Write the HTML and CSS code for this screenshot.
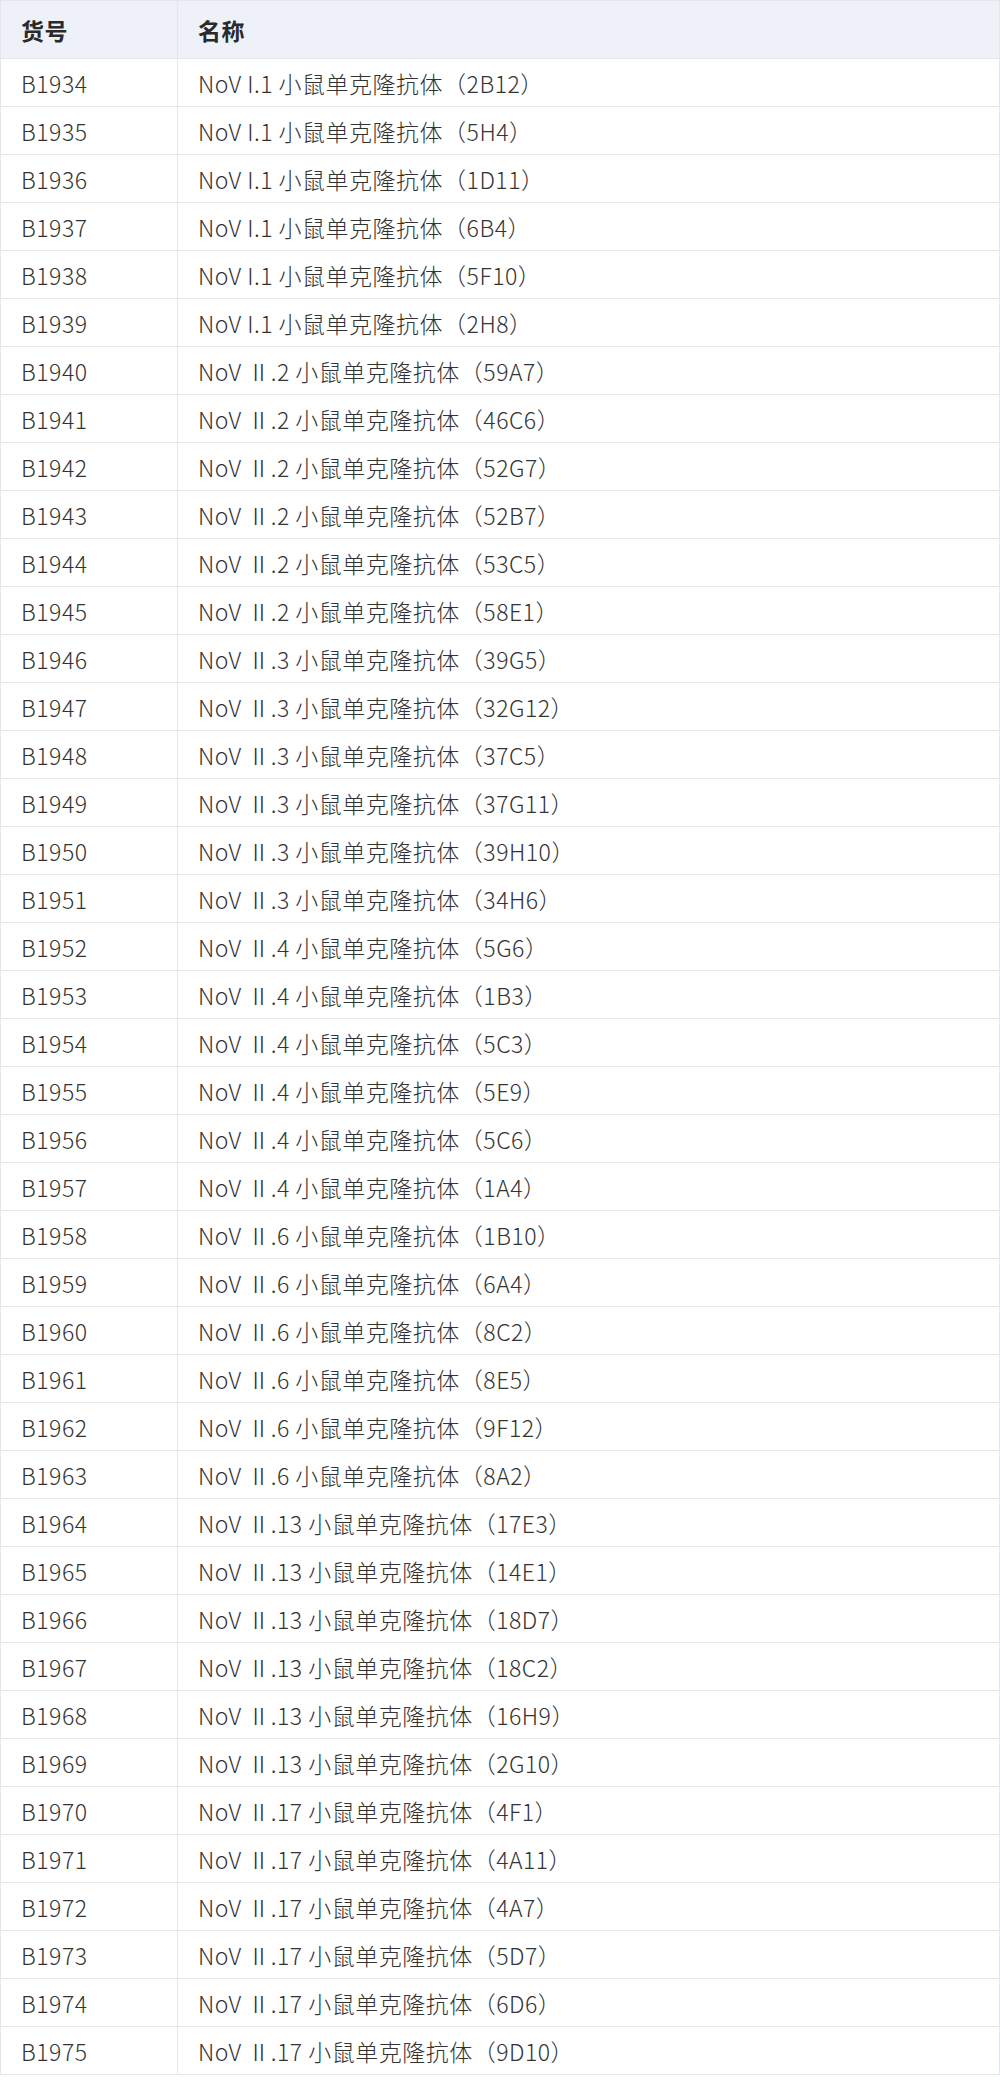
FILE: index.html
```html
<!DOCTYPE html>
<html lang="zh-CN">
<head>
<meta charset="utf-8">
<title>产品列表</title>
<link rel="stylesheet" href="styles.css">
</head>
<body>
<div class="table">
  <div class="row head"><div class="cell c1">货号</div><div class="cell c2">名称</div></div>
  <div class="row"><div class="cell c1">B1934</div><div class="cell c2">NoV I.1 小鼠单克隆抗体（2B12）</div></div>
  <div class="row"><div class="cell c1">B1935</div><div class="cell c2">NoV I.1 小鼠单克隆抗体（5H4）</div></div>
  <div class="row"><div class="cell c1">B1936</div><div class="cell c2">NoV I.1 小鼠单克隆抗体（1D11）</div></div>
  <div class="row"><div class="cell c1">B1937</div><div class="cell c2">NoV I.1 小鼠单克隆抗体（6B4）</div></div>
  <div class="row"><div class="cell c1">B1938</div><div class="cell c2">NoV I.1 小鼠单克隆抗体（5F10）</div></div>
  <div class="row"><div class="cell c1">B1939</div><div class="cell c2">NoV I.1 小鼠单克隆抗体（2H8）</div></div>
  <div class="row"><div class="cell c1">B1940</div><div class="cell c2">NoV Ⅱ.2 小鼠单克隆抗体（59A7）</div></div>
  <div class="row"><div class="cell c1">B1941</div><div class="cell c2">NoV Ⅱ.2 小鼠单克隆抗体（46C6）</div></div>
  <div class="row"><div class="cell c1">B1942</div><div class="cell c2">NoV Ⅱ.2 小鼠单克隆抗体（52G7）</div></div>
  <div class="row"><div class="cell c1">B1943</div><div class="cell c2">NoV Ⅱ.2 小鼠单克隆抗体（52B7）</div></div>
  <div class="row"><div class="cell c1">B1944</div><div class="cell c2">NoV Ⅱ.2 小鼠单克隆抗体（53C5）</div></div>
  <div class="row"><div class="cell c1">B1945</div><div class="cell c2">NoV Ⅱ.2 小鼠单克隆抗体（58E1）</div></div>
  <div class="row"><div class="cell c1">B1946</div><div class="cell c2">NoV Ⅱ.3 小鼠单克隆抗体（39G5）</div></div>
  <div class="row"><div class="cell c1">B1947</div><div class="cell c2">NoV Ⅱ.3 小鼠单克隆抗体（32G12）</div></div>
  <div class="row"><div class="cell c1">B1948</div><div class="cell c2">NoV Ⅱ.3 小鼠单克隆抗体（37C5）</div></div>
  <div class="row"><div class="cell c1">B1949</div><div class="cell c2">NoV Ⅱ.3 小鼠单克隆抗体（37G11）</div></div>
  <div class="row"><div class="cell c1">B1950</div><div class="cell c2">NoV Ⅱ.3 小鼠单克隆抗体（39H10）</div></div>
  <div class="row"><div class="cell c1">B1951</div><div class="cell c2">NoV Ⅱ.3 小鼠单克隆抗体（34H6）</div></div>
  <div class="row"><div class="cell c1">B1952</div><div class="cell c2">NoV Ⅱ.4 小鼠单克隆抗体（5G6）</div></div>
  <div class="row"><div class="cell c1">B1953</div><div class="cell c2">NoV Ⅱ.4 小鼠单克隆抗体（1B3）</div></div>
  <div class="row"><div class="cell c1">B1954</div><div class="cell c2">NoV Ⅱ.4 小鼠单克隆抗体（5C3）</div></div>
  <div class="row"><div class="cell c1">B1955</div><div class="cell c2">NoV Ⅱ.4 小鼠单克隆抗体（5E9）</div></div>
  <div class="row"><div class="cell c1">B1956</div><div class="cell c2">NoV Ⅱ.4 小鼠单克隆抗体（5C6）</div></div>
  <div class="row"><div class="cell c1">B1957</div><div class="cell c2">NoV Ⅱ.4 小鼠单克隆抗体（1A4）</div></div>
  <div class="row"><div class="cell c1">B1958</div><div class="cell c2">NoV Ⅱ.6 小鼠单克隆抗体（1B10）</div></div>
  <div class="row"><div class="cell c1">B1959</div><div class="cell c2">NoV Ⅱ.6 小鼠单克隆抗体（6A4）</div></div>
  <div class="row"><div class="cell c1">B1960</div><div class="cell c2">NoV Ⅱ.6 小鼠单克隆抗体（8C2）</div></div>
  <div class="row"><div class="cell c1">B1961</div><div class="cell c2">NoV Ⅱ.6 小鼠单克隆抗体（8E5）</div></div>
  <div class="row"><div class="cell c1">B1962</div><div class="cell c2">NoV Ⅱ.6 小鼠单克隆抗体（9F12）</div></div>
  <div class="row"><div class="cell c1">B1963</div><div class="cell c2">NoV Ⅱ.6 小鼠单克隆抗体（8A2）</div></div>
  <div class="row"><div class="cell c1">B1964</div><div class="cell c2">NoV Ⅱ.13 小鼠单克隆抗体（17E3）</div></div>
  <div class="row"><div class="cell c1">B1965</div><div class="cell c2">NoV Ⅱ.13 小鼠单克隆抗体（14E1）</div></div>
  <div class="row"><div class="cell c1">B1966</div><div class="cell c2">NoV Ⅱ.13 小鼠单克隆抗体（18D7）</div></div>
  <div class="row"><div class="cell c1">B1967</div><div class="cell c2">NoV Ⅱ.13 小鼠单克隆抗体（18C2）</div></div>
  <div class="row"><div class="cell c1">B1968</div><div class="cell c2">NoV Ⅱ.13 小鼠单克隆抗体（16H9）</div></div>
  <div class="row"><div class="cell c1">B1969</div><div class="cell c2">NoV Ⅱ.13 小鼠单克隆抗体（2G10）</div></div>
  <div class="row"><div class="cell c1">B1970</div><div class="cell c2">NoV Ⅱ.17 小鼠单克隆抗体（4F1）</div></div>
  <div class="row"><div class="cell c1">B1971</div><div class="cell c2">NoV Ⅱ.17 小鼠单克隆抗体（4A11）</div></div>
  <div class="row"><div class="cell c1">B1972</div><div class="cell c2">NoV Ⅱ.17 小鼠单克隆抗体（4A7）</div></div>
  <div class="row"><div class="cell c1">B1973</div><div class="cell c2">NoV Ⅱ.17 小鼠单克隆抗体（5D7）</div></div>
  <div class="row"><div class="cell c1">B1974</div><div class="cell c2">NoV Ⅱ.17 小鼠单克隆抗体（6D6）</div></div>
  <div class="row"><div class="cell c1">B1975</div><div class="cell c2">NoV Ⅱ.17 小鼠单克隆抗体（9D10）</div></div>
</div>
</body>
</html>
```
FILE: styles.css
```css
html, body {
  margin: 0;
  padding: 0;
  background: #ffffff;
}
body {
  font-family: "Noto Sans CJK SC", "Noto Sans", sans-serif;
  font-size: 23px;
  font-weight: 300;
  letter-spacing: 0.5px;
  color: #333333;
}
.table {
  width: 1000px;
  box-sizing: border-box;
  border-top: 1px solid #e3e6eb;
  border-left: 1px solid #e3e6eb;
  border-right: 1px solid #e3e6eb;
}
.row {
  display: grid;
  grid-template-columns: 177px 1fr;
  height: 48px;
  box-sizing: border-box;
  border-bottom: 1px solid #e3e6eb;
}
.row.head {
  height: 58px;
  background: #eef1f8;
  color: #2a2a2a;
  font-weight: 700;
}
.cell {
  display: flex;
  align-items: center;
  padding-left: 20px;
  box-sizing: border-box;
  white-space: nowrap;
}
.c1 {
  border-right: 1px solid #e3e6eb;
}
```
